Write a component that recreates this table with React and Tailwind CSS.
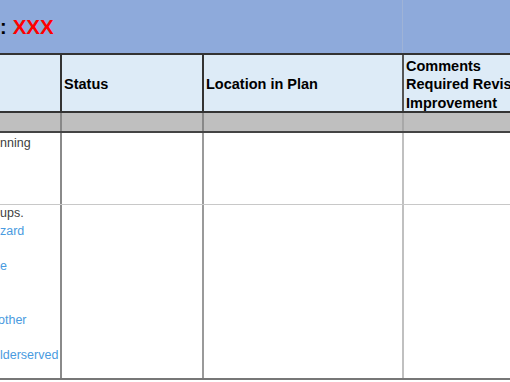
const COLS = "grid grid-cols-[60px_142px_200px_1fr]";

function Cell({ children, className = "" }) {
  return <div className={`overflow-hidden whitespace-nowrap ${className}`}>{children}</div>;
}

export default function App() {
  return (
    <div className="w-[510px] h-[382px] overflow-hidden bg-white font-['Liberation_Sans',Arial,sans-serif] text-black">
      {/* Title band */}
      <div className="grid grid-cols-[403px_1fr] h-[53px] bg-[#8eaadb]">
        <div className="flex items-center border-r border-[#9fb3d6] pt-[1px]">
          <span className="text-[20px] font-bold leading-none">:</span>
          <span className="ml-[6px] text-[20.5px] font-bold leading-none text-[#ff0000]">XXX</span>
        </div>
        <div />
      </div>

      {/* Column headings */}
      <div className={`${COLS} h-[60px] border-y-2 border-[#333] bg-[#ddebf7] text-[14.5px] font-bold leading-[18.5px]`}>
        <Cell />
        <Cell className="flex items-center border-l-2 border-[#333] pl-[2px] pt-[3px]">Status</Cell>
        <Cell className="flex items-center border-l-2 border-[#333] pl-[2px] pt-[3px]">Location in Plan</Cell>
        <Cell className="flex flex-col justify-center border-l-2 border-[#555] pl-[2px] pt-[3px]">
          <span>Comments</span>
          <span>Required Revisions</span>
          <span>Improvement</span>
        </Cell>
      </div>

      {/* Section row */}
      <div className={`${COLS} h-[20px] border-b-2 border-[#444] bg-[#bfbfbf]`}>
        <Cell />
        <Cell className="border-l-2 border-[#888]" />
        <Cell className="border-l-2 border-[#888]" />
        <Cell className="border-l-2 border-[#a8a8a8]" />
      </div>

      {/* Row 1 */}
      <div className={`${COLS} h-[72px] border-b border-[#c8c8c8] text-[12.5px] leading-[18px] text-[#404040]`}>
        <Cell className="pt-[1px]">nning</Cell>
        <Cell className="border-l-2 border-[#8a8a8a]" />
        <Cell className="border-l-2 border-[#9a9a9a]" />
        <Cell className="border-l-2 border-[#c0c0c0]" />
      </div>

      {/* Row 2 */}
      <div className={`${COLS} h-[175px] border-b-2 border-[#777] text-[12.5px] leading-[17.8px]`}>
        <Cell className="flex flex-col">
          <span className="text-[#404040]">ups.</span>
          <span className="text-[#4a9be0]">zard</span>
          <span>&nbsp;</span>
          <span className="text-[#4a9be0]">e</span>
          <span>&nbsp;</span>
          <span>&nbsp;</span>
          <span className="text-[#4a9be0] -ml-[2px]">other</span>
          <span>&nbsp;</span>
          <span className="text-[#4a9be0]">lderserved</span>
        </Cell>
        <Cell className="border-l-2 border-[#8a8a8a]" />
        <Cell className="border-l-2 border-[#9a9a9a]" />
        <Cell className="border-l-2 border-[#c0c0c0]" />
      </div>
    </div>
  );
}
